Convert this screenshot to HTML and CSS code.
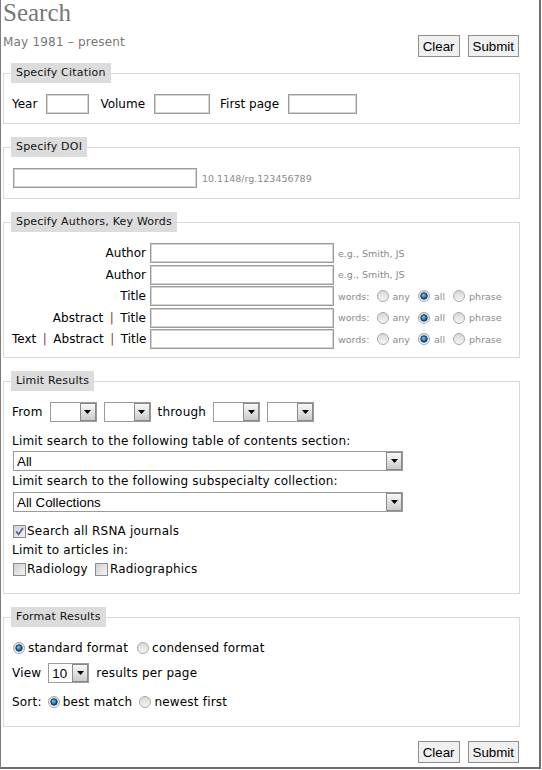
FILE: index.html
```html
<!DOCTYPE html>
<html lang="en">
<head>
<meta charset="utf-8">
<title>Search</title>
<link rel="stylesheet" href="styles.css">
</head>
<body>
<svg class="defs" width="0" height="0" aria-hidden="true">
  <defs>
    <linearGradient id="gRadio" x1="0" y1="0" x2="0" y2="1">
      <stop offset="0" stop-color="#d6d6d6"/>
      <stop offset="1" stop-color="#f7f7f7"/>
    </linearGradient>
    <radialGradient id="gDot" cx="0.4" cy="0.35" r="0.7">
      <stop offset="0" stop-color="#7cc8f4"/>
      <stop offset="0.6" stop-color="#1f76b8"/>
      <stop offset="1" stop-color="#0f4a7a"/>
    </radialGradient>
    <linearGradient id="gBox" x1="0" y1="0" x2="1" y2="1">
      <stop offset="0" stop-color="#cfcfcf"/>
      <stop offset="1" stop-color="#f4f4f4"/>
    </linearGradient>
  </defs>
</svg>
<div class="page">
  <h1 class="title">Search</h1>
  <div class="topbar">
    <span class="range">May 1981 – present</span>
    <div class="actions">
      <button class="btn" type="button">Clear</button>
      <button class="btn" type="button">Submit</button>
    </div>
  </div>

  <form class="form">
    <fieldset class="fs fs-cite">
      <legend>Specify Citation</legend>
      <div class="cite-row">
        <span class="lbl">Year</span><input class="txt w-year" type="text">
        <span class="lbl">Volume</span><input class="txt w-vol" type="text">
        <span class="lbl">First page</span><input class="txt w-page" type="text">
      </div>
    </fieldset>

    <fieldset class="fs fs-doi">
      <legend>Specify DOI</legend>
      <div class="doi-row">
        <input class="txt w-doi" type="text"><span class="hint">10.1148/rg.123456789</span>
      </div>
    </fieldset>

    <fieldset class="fs fs-auth">
      <legend>Specify Authors, Key Words</legend>
      <div class="arows">
        <div class="arow">
          <span class="alabel">Author</span><input class="txt w-auth" type="text"><span class="hint">e.g., Smith, JS</span>
        </div>
        <div class="arow">
          <span class="alabel">Author</span><input class="txt w-auth" type="text"><span class="hint">e.g., Smith, JS</span>
        </div>
        <div class="arow">
          <span class="alabel">Title</span><input class="txt w-auth" type="text">
          <span class="hint words"><span class="wl">words:</span>
            <span class="opt"><svg class="rd" viewBox="0 0 12 12" width="12" height="12"><circle cx="6" cy="6" r="5.5" fill="url(#gRadio)" stroke="#a9a9a9"/></svg>any</span>
            <span class="opt"><svg class="rd" viewBox="0 0 12 12" width="12" height="12"><circle cx="6" cy="6" r="5.5" fill="url(#gRadio)" stroke="#a9a9a9"/><circle cx="6" cy="6" r="3.2" fill="url(#gDot)" stroke="#16324c"/></svg>all</span>
            <span class="opt"><svg class="rd" viewBox="0 0 12 12" width="12" height="12"><circle cx="6" cy="6" r="5.5" fill="url(#gRadio)" stroke="#a9a9a9"/></svg>phrase</span>
          </span>
        </div>
        <div class="arow">
          <span class="alabel">Abstract<span class="sep">|</span>Title</span><input class="txt w-auth" type="text">
          <span class="hint words"><span class="wl">words:</span>
            <span class="opt"><svg class="rd" viewBox="0 0 12 12" width="12" height="12"><circle cx="6" cy="6" r="5.5" fill="url(#gRadio)" stroke="#a9a9a9"/></svg>any</span>
            <span class="opt"><svg class="rd" viewBox="0 0 12 12" width="12" height="12"><circle cx="6" cy="6" r="5.5" fill="url(#gRadio)" stroke="#a9a9a9"/><circle cx="6" cy="6" r="3.2" fill="url(#gDot)" stroke="#16324c"/></svg>all</span>
            <span class="opt"><svg class="rd" viewBox="0 0 12 12" width="12" height="12"><circle cx="6" cy="6" r="5.5" fill="url(#gRadio)" stroke="#a9a9a9"/></svg>phrase</span>
          </span>
        </div>
        <div class="arow">
          <span class="alabel">Text<span class="sep">|</span>Abstract<span class="sep">|</span>Title</span><input class="txt w-auth" type="text">
          <span class="hint words"><span class="wl">words:</span>
            <span class="opt"><svg class="rd" viewBox="0 0 12 12" width="12" height="12"><circle cx="6" cy="6" r="5.5" fill="url(#gRadio)" stroke="#a9a9a9"/></svg>any</span>
            <span class="opt"><svg class="rd" viewBox="0 0 12 12" width="12" height="12"><circle cx="6" cy="6" r="5.5" fill="url(#gRadio)" stroke="#a9a9a9"/><circle cx="6" cy="6" r="3.2" fill="url(#gDot)" stroke="#16324c"/></svg>all</span>
            <span class="opt"><svg class="rd" viewBox="0 0 12 12" width="12" height="12"><circle cx="6" cy="6" r="5.5" fill="url(#gRadio)" stroke="#a9a9a9"/></svg>phrase</span>
          </span>
        </div>
      </div>
    </fieldset>

    <fieldset class="fs fs-limit">
      <legend>Limit Results</legend>
      <div class="from-row">
        <span class="lbl">From</span>
        <span class="sel w-small"><select><option></option></select><span class="arr"><svg width="7" height="4" viewBox="0 0 7 4"><path d="M0 0H7L3.5 4Z" fill="#000"/></svg></span></span>
        <span class="sel w-small"><select><option></option></select><span class="arr"><svg width="7" height="4" viewBox="0 0 7 4"><path d="M0 0H7L3.5 4Z" fill="#000"/></svg></span></span>
        <span class="lbl">through</span>
        <span class="sel w-small"><select><option></option></select><span class="arr"><svg width="7" height="4" viewBox="0 0 7 4"><path d="M0 0H7L3.5 4Z" fill="#000"/></svg></span></span>
        <span class="sel w-small"><select><option></option></select><span class="arr"><svg width="7" height="4" viewBox="0 0 7 4"><path d="M0 0H7L3.5 4Z" fill="#000"/></svg></span></span>
      </div>
      <p class="ltext">Limit search to the following table of contents section:</p>
      <span class="sel w-big sel-1"><select><option>All</option></select><span class="arr"><svg width="7" height="4" viewBox="0 0 7 4"><path d="M0 0H7L3.5 4Z" fill="#000"/></svg></span></span>
      <p class="ltext ltext-2">Limit search to the following subspecialty collection:</p>
      <span class="sel w-big sel-2"><select><option>All Collections</option></select><span class="arr"><svg width="7" height="4" viewBox="0 0 7 4"><path d="M0 0H7L3.5 4Z" fill="#000"/></svg></span></span>
      <div class="checks">
        <div class="crow"><svg class="cb" viewBox="0 0 13 13" width="13" height="13"><rect x=".5" y=".5" width="12" height="12" fill="url(#gBox)" stroke="#8c8c8c"/><path d="M3.2 6.4L5.6 9.4L10 3" fill="none" stroke="#4f63a0" stroke-width="1.7"/></svg>Search all RSNA journals</div>
        <div class="crow">Limit to articles in:</div>
        <div class="crow"><svg class="cb" viewBox="0 0 13 13" width="13" height="13"><rect x=".5" y=".5" width="12" height="12" fill="url(#gBox)" stroke="#8c8c8c"/></svg>Radiology<svg class="cb cb-2" viewBox="0 0 13 13" width="13" height="13"><rect x=".5" y=".5" width="12" height="12" fill="url(#gBox)" stroke="#8c8c8c"/></svg>Radiographics</div>
      </div>
    </fieldset>

    <fieldset class="fs fs-format">
      <legend>Format Results</legend>
      <div class="frow">
        <svg class="rd rd-f" viewBox="0 0 12 12" width="12" height="12"><circle cx="6" cy="6" r="5.5" fill="url(#gRadio)" stroke="#a9a9a9"/><circle cx="6" cy="6" r="3.2" fill="url(#gDot)" stroke="#16324c"/></svg><span class="ft">standard format</span>
        <svg class="rd rd-f rd-next" viewBox="0 0 12 12" width="12" height="12"><circle cx="6" cy="6" r="5.5" fill="url(#gRadio)" stroke="#a9a9a9"/></svg><span class="ft">condensed format</span>
      </div>
      <div class="vrow">
        <span class="lbl">View</span>
        <span class="sel w-view"><select><option>10</option></select><span class="arr"><svg width="7" height="4" viewBox="0 0 7 4"><path d="M0 0H7L3.5 4Z" fill="#000"/></svg></span></span>
        <span class="lbl">results per page</span>
      </div>
      <div class="frow srow">
        <span class="lbl">Sort:</span>
        <svg class="rd rd-f" viewBox="0 0 12 12" width="12" height="12"><circle cx="6" cy="6" r="5.5" fill="url(#gRadio)" stroke="#a9a9a9"/><circle cx="6" cy="6" r="3.2" fill="url(#gDot)" stroke="#16324c"/></svg><span class="ft">best match</span>
        <svg class="rd rd-f rd-next" viewBox="0 0 12 12" width="12" height="12"><circle cx="6" cy="6" r="5.5" fill="url(#gRadio)" stroke="#a9a9a9"/></svg><span class="ft">newest first</span>
      </div>
    </fieldset>
  </form>

  <div class="actions actions-bottom">
    <button class="btn" type="button">Clear</button>
    <button class="btn" type="button">Submit</button>
  </div>
</div>
</body>
</html>
```

FILE: styles.css
```css
html, body {
  margin: 0;
  padding: 0;
  background: #fff;
}

body {
  font-family: "DejaVu Sans", Verdana, sans-serif;
  font-size: 12px;
  color: #000;
}

.defs {
  position: absolute;
  width: 0;
  height: 0;
  overflow: hidden;
}

.page {
  box-sizing: border-box;
  width: 541px;
  height: 769px;
  border-left: 1px solid #7d7d7d;
  border-right: 2px solid #6e6e6e;
  border-bottom: 2px solid #6e6e6e;
  padding: 0 19px 0 2px;
}

.title {
  margin: 0;
  font-family: "Liberation Serif", "Times New Roman", serif;
  font-size: 25px;
  line-height: 26px;
  font-weight: normal;
  color: #777;
}

.topbar {
  display: flex;
  justify-content: space-between;
  align-items: flex-start;
  margin-top: 9px;
}

.range {
  color: #777;
  font-size: 12px;
  line-height: 14px;
  letter-spacing: 0.2px;
}

.actions {
  display: flex;
  gap: 8px;
  margin-right: 1px;
}

.actions-bottom {
  justify-content: flex-end;
  margin-top: 14px;
}

.btn {
  font-family: "Liberation Sans", Arial, sans-serif;
  font-size: 13.33px;
  height: 22px;
  padding: 0 4px;
  margin: 0;
  border: 1px solid #8e8e8e;
  border-radius: 0;
  background: #f0f0f0;
  color: #000;
}

.form {
  margin: 6px 0 0;
}

.fs {
  margin: 0 0 13px;
  padding: 11px 8px 9px;
  border: 1px solid #d9d9d9;
  min-width: 0;
}

.fs legend {
  background: #dcdcdc;
  padding: 0 5px;
  margin-left: -1px;
  height: 20px;
  line-height: 20px;
  font-size: 11px;
  letter-spacing: 0.2px;
  color: #111;
}

.fs-doi { padding-bottom: 10px; }
.fs-auth { padding-bottom: 8px; }
.fs-limit { padding-bottom: 14px; }
.fs-format { padding-bottom: 15px; margin-bottom: 0; }

.fs-limit, .fs-format { letter-spacing: 0.2px; }

.txt {
  box-sizing: border-box;
  height: 20px;
  margin: 0;
  padding: 0 3px;
  border: 1px solid #9c9c9c;
  box-shadow: inset 0 0 0 1px #d4d4d4;
  border-radius: 0;
  background: #fff;
  font-family: "Liberation Sans", Arial, sans-serif;
  font-size: 13px;
}

.w-year { width: 43px; }
.w-vol { width: 56px; }
.w-page { width: 69px; }
.w-doi { width: 184px; margin-left: 1px; }
.w-auth { width: 184px; }

.cite-row {
  display: flex;
  align-items: center;
  height: 20px;
}

.cite-row .lbl { margin-right: 9px; }
.cite-row .txt { margin-right: 10px; }
.cite-row .w-year { margin-right: 11px; }

.hint {
  color: #8a8a8a;
  font-size: 9.5px;
  letter-spacing: 0;
}

.doi-row {
  display: flex;
  align-items: center;
  height: 20px;
}

.doi-row .hint { margin-left: 5px; }

.arows {
  display: flex;
  flex-direction: column;
  gap: 1.5px;
}

.arow {
  display: grid;
  grid-template-columns: 134px 184px auto;
  column-gap: 4px;
  align-items: center;
  height: 20px;
}

.alabel {
  text-align: right;
  white-space: nowrap;
}

.sep {
  color: #8a3b3b;
  margin: 0 6.5px;
}

.words {
  display: flex;
  align-items: center;
}

.wl { margin-right: 7px; }

.opt {
  display: inline-flex;
  align-items: center;
  gap: 4px;
  margin-right: 8px;
}

.rd { display: block; flex: none; }
.cb { display: block; flex: none; }

/* selects */
.sel {
  position: relative;
  display: inline-block;
  height: 20px;
  vertical-align: top;
}

.sel select {
  box-sizing: border-box;
  width: 100%;
  height: 100%;
  margin: 0;
  padding: 0 18px 0 3px;
  -webkit-appearance: none;
  appearance: none;
  border: 1px solid #9a9a9a;
  border-radius: 0;
  background: #fff;
  color: #000;
  font-family: "Liberation Sans", Arial, sans-serif;
  font-size: 13.33px;
  letter-spacing: 0;
}

.sel .arr {
  position: absolute;
  top: 1px;
  right: 1px;
  bottom: 1px;
  width: 16px;
  box-sizing: border-box;
  border: 1px solid #8a8a8a;
  background: linear-gradient(#f8f8f8, #cbcbcb);
  display: flex;
  align-items: center;
  justify-content: center;
  pointer-events: none;
}

.w-small { width: 47px; }
.w-big { width: 390px; margin-left: 1px; display: block; }
.w-view { width: 41px; }

.from-row {
  display: flex;
  align-items: center;
  height: 20px;
  gap: 7px;
}

.ltext {
  margin: 12px 0 0;
  line-height: 15px;
}

.ltext-2 { margin-top: 3px; }

.sel-1 { margin-top: 2px; }
.sel-2 { margin-top: 3px; }

.checks { margin-top: 10px; }

.crow {
  display: flex;
  align-items: center;
  height: 19px;
  line-height: 19px;
}

.crow .cb { margin: 0 1px 0 1px; }
.crow .cb-2 { margin-left: 7px; margin-right: 2px; }

.frow {
  display: flex;
  align-items: center;
  height: 19px;
}

.rd-f { margin-left: 1px; margin-right: 3px; }
.rd-next { margin-left: 9px; }

.srow { margin-top: 9px; }
.srow .lbl { margin-right: 6px; }
.srow .rd-f { margin-left: 0; }
.srow .rd-next { margin-left: 7px; }

.vrow {
  display: flex;
  align-items: center;
  height: 20px;
  margin-top: 6px;
  gap: 7px;
}
```
